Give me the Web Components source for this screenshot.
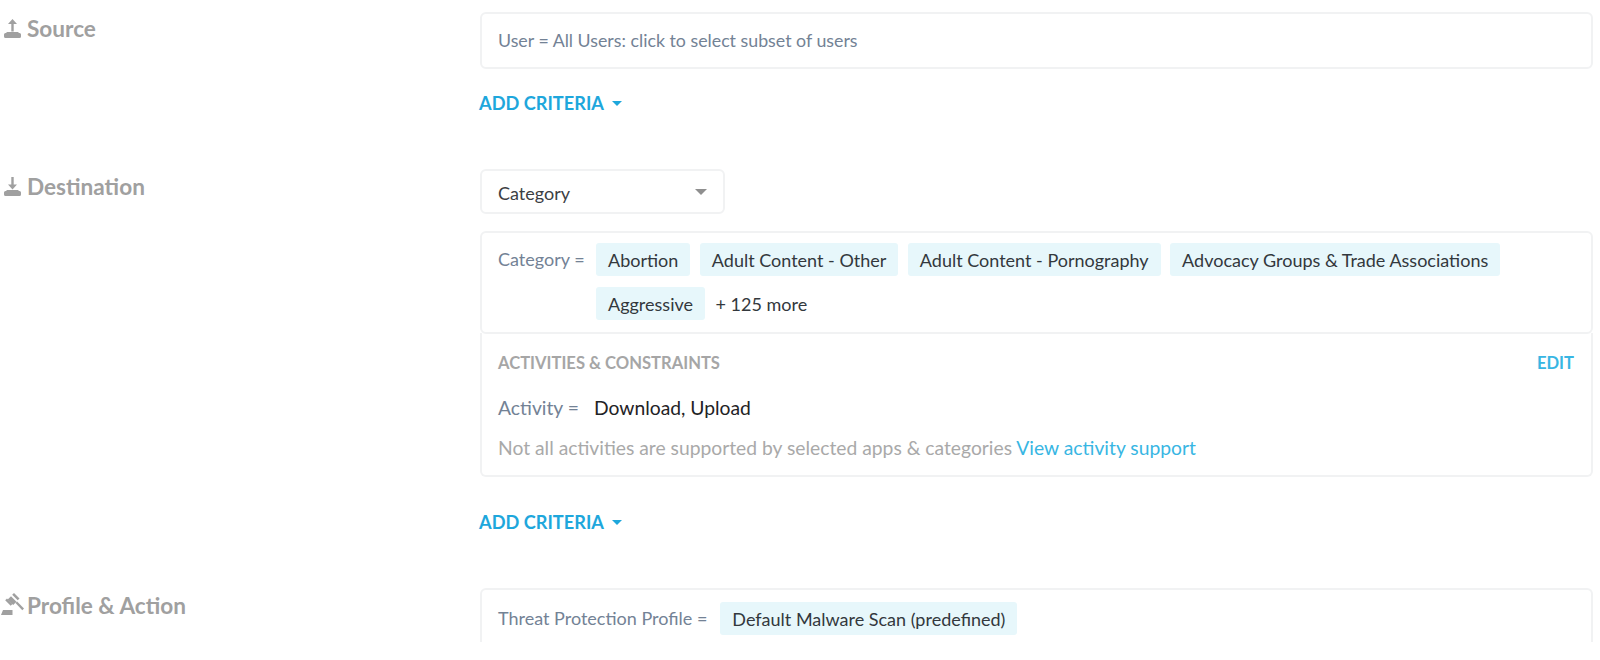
<!DOCTYPE html>
<html>
<head>
<meta charset="utf-8">
<style>
  html, body { margin: 0; background: #fff; }
  body { font-family: "Lato", "Liberation Sans", sans-serif; font-size: 18px; height: 660px; overflow: hidden; }
  .page { height: 642px; overflow: hidden; padding: 12px 7px 0 0; box-sizing: border-box; }
  svg { display: block; }
</style>
</head>
<body>
<template id="section-tpl">
  <style>
    :host { display: grid; grid-template-columns: 480px 1fr; }
    .label { display: flex; align-items: center; align-self: start; gap: 6px; padding-left: 4px; height: var(--label-h, 32px); color: #a0a0a0; font-size: 22.6px; font-weight: 700; }
    .icon { width: 17px; height: 19px; flex: none; }
    .body { display: flex; flex-direction: column; min-width: 0; }
  </style>
  <div class="label"><span class="icon"><slot name="icon"></slot></span><span id="title"></span></div>
  <div class="body"><slot></slot></div>
</template>

<template id="card-tpl">
  <style>
    :host { display: block; box-sizing: border-box; background: #fff; border: 2px solid #f1f2f3; border-radius: 6px; padding: 11px 16px; color: #738295; }
  </style>
  <slot></slot>
</template>

<template id="add-tpl">
  <style>
    :host { display: flex; align-items: center; gap: 8px; height: 22px; color: #1ea7dc; font-size: 18.2px; font-weight: 700; }
    span { margin-left: -1px; }
    i { width: 0; height: 0; border: 5px solid transparent; border-top-color: #1ea7dc; border-bottom: 0; }
  </style>
  <span>ADD CRITERIA</span><i></i>
</template>

<template id="select-tpl">
  <style>
    :host { display: flex; align-items: center; justify-content: space-between; box-sizing: border-box; width: 245px; height: 45px; padding: 3px 16px 0 16px; border: 2px solid #f1f2f3; border-radius: 6px; color: #3c4043; }
    i { width: 0; height: 0; margin-top: -3px; border: 6px solid transparent; border-top-color: #8f8f8f; border-bottom: 0; }
  </style>
  <slot></slot><i></i>
</template>

<template id="chip-tpl">
  <style>
    :host { display: inline-flex; align-items: center; box-sizing: border-box; height: 33px; padding: 0 12px; background: #e7f7fb; border-radius: 3px; color: #33383d; white-space: nowrap; }
  </style>
  <slot></slot>
</template>

<template id="criteria-tpl">
  <style>
    :host { display: grid; grid-template-columns: 98px 1fr; }
    .name { line-height: 33px; color: #738295; white-space: nowrap; }
    .items { display: flex; flex-wrap: wrap; align-items: center; gap: 11px 9.5px; }
  </style>
  <span class="name"><slot name="name"></slot></span>
  <div class="items"><slot></slot></div>
</template>

<template id="activity-tpl">
  <style>
    :host { display: block; box-sizing: border-box; height: 144px; margin-top: -1px; padding: 17px 17px 0 16px; border: 2px solid #f1f2f3; border-top: 0; border-radius: 0 0 6px 6px; }
    .head { display: flex; justify-content: space-between; font-size: 16.6px; font-weight: 700; color: #a6a6a6; line-height: 26px; }
    .edit { color: #38b6e3; }
    .row { display: flex; gap: 15px; margin-top: 19px; line-height: 26px; font-size: 19.3px; color: #1f2326; }
    .row b { font-weight: 400; color: #738295; }
    .note { margin-top: 14px; line-height: 26px; font-size: 19.3px; color: #a9a9a9; }
    .note a { color: #38b6e3; }
  </style>
  <div class="head"><span>ACTIVITIES &amp; CONSTRAINTS</span><span class="edit">EDIT</span></div>
  <div class="row"><b>Activity =</b><span>Download, Upload</span></div>
  <div class="note">Not all activities are supported by selected apps &amp; categories <a>View activity support</a></div>
</template>

<div class="page">
  <form-section title-text="Source" style="height:157px">
    <svg slot="icon" viewBox="0 0 17 19" width="17" height="19" fill="#a0a0a0"><path d="M8.500 0 13 5H9.700v7.500H7.300V5H4z"/><path d="M2.500 13h12v1h1A1.500 1.500 0 0 1 17 15.500v2a1.500 1.500 0 0 1-1.500 1.500h-14A1.500 1.500 0 0 1 0 17.500v-2A1.500 1.500 0 0 1 1.500 14h1z"/></svg>
    <form-card style="height:57px;line-height:31px;font-size:17.8px">User = All Users: click to select subset of users</form-card>
    <add-criteria style="margin-top:23px"></add-criteria>
  </form-section>

  <form-section title-text="Destination" style="height:419px;--label-h:34px">
    <svg slot="icon" viewBox="0 0 17 19" width="17" height="19" fill="#a0a0a0"><path d="M7.300 0h2.400v7.500H13L8.500 12.500 4 7.500h3.300z"/><path d="M2.500 13h12v1h1A1.500 1.500 0 0 1 17 15.500v2a1.500 1.500 0 0 1-1.500 1.500h-14A1.500 1.500 0 0 1 0 17.500v-2A1.500 1.500 0 0 1 1.500 14h1z"/></svg>
    <form-select>Category</form-select>
    <form-card style="margin-top:17px;padding:10px 16px 12px">
      <form-criteria>
        <span slot="name">Category =</span>
        <form-chip>Abortion</form-chip>
        <form-chip>Adult Content - Other</form-chip>
        <form-chip>Adult Content - Pornography</form-chip>
        <form-chip>Advocacy Groups &amp; Trade Associations</form-chip>
        <form-chip>Aggressive</form-chip>
        <span style="color:#33383d;padding-left:1px">+ 125 more</span>
      </form-criteria>
    </form-card>
    <activity-panel></activity-panel>
    <add-criteria style="margin-top:34px"></add-criteria>
  </form-section>

  <form-section title-text="Profile &amp; Action" style="--label-h:34px">
    <svg slot="icon" viewBox="0 0 23 22" width="23" height="22" fill="#a0a0a0" style="margin:-3px 0 0 -3px"><path d="M13 0l5.500 5.500-1.800 1.800-5.500-5.500z"/><path d="M10 3.200l5.500 5.500-3.300 3.300-5.500-5.500z"/><path d="M6 5.500l5.500 5.500-1.800 1.800-5.500-5.500z"/><path d="M14.500 10l1.600-1.600L23 15.500l-1.700 1.700z"/><path d="M2 17h9.500v5H0z"/></svg>
    <form-card style="padding:12px 16px;height:60px;border-bottom:0;border-radius:6px 6px 0 0">
      <form-criteria style="grid-template-columns:auto 1fr;column-gap:13px">
        <span slot="name">Threat Protection Profile =</span>
        <form-chip>Default Malware Scan (predefined)</form-chip>
      </form-criteria>
    </form-card>
  </form-section>
</div>

<script>
// 模板克隆的公共基类
class TplElement extends HTMLElement{
  constructor(id){
    super();
    let sd = this.attachShadow({mode:'open'});
    sd.appendChild(document.getElementById(id).content.cloneNode(true));
  }
}

class FormSection extends TplElement{
  constructor(){
    super('section-tpl');
    this.shadowRoot.querySelector('#title').textContent = this.getAttribute('title-text') || '';
  }
}
class FormCard extends TplElement{ constructor(){ super('card-tpl'); } }
class AddCriteria extends TplElement{ constructor(){ super('add-tpl'); } }
class FormSelect extends TplElement{ constructor(){ super('select-tpl'); } }
class FormChip extends TplElement{ constructor(){ super('chip-tpl'); } }
class FormCriteria extends TplElement{ constructor(){ super('criteria-tpl'); } }
class ActivityPanel extends TplElement{ constructor(){ super('activity-tpl'); } }

customElements.define('form-section', FormSection);
customElements.define('form-card', FormCard);
customElements.define('add-criteria', AddCriteria);
customElements.define('form-select', FormSelect);
customElements.define('form-chip', FormChip);
customElements.define('form-criteria', FormCriteria);
customElements.define('activity-panel', ActivityPanel);
</script>
</body>
</html>
